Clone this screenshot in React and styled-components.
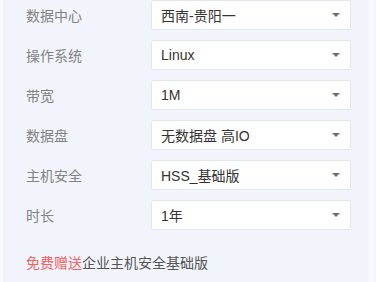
import React from "react";
import styled, { createGlobalStyle } from "styled-components";

const GlobalStyle = createGlobalStyle`
  html, body {
    margin: 0;
    padding: 0;
    background: #fafbfe;
  }
  body {
    font-family: "Liberation Sans", "Noto Sans CJK SC", sans-serif;
  }
`;

const Page = styled.div`
  display: flex;
  width: 376px;
  height: 282px;
  overflow: hidden;
`;

const EdgeStrip = styled.div`
  width: ${p => p.w}px;
  flex-shrink: 0;
  background: ${p => p.bg};
`;

const Panel = styled.section`
  flex: 1;
  background: #f1f4fb;
  padding: 0 0 0 23px;
  display: flex;
  flex-direction: column;
`;

const Form = styled.div`
  display: flex;
  flex-direction: column;
  gap: 10px;
`;

const Row = styled.div`
  display: grid;
  grid-template-columns: 125px 200px;
  align-items: center;
  height: 30px;
`;

const Label = styled.span`
  font-size: 14px;
  color: #838383;
`;

const Select = styled.div`
  box-sizing: border-box;
  height: 30px;
  background: #fff;
  border: 1px solid #e3e6ee;
  border-radius: 2px;
  display: flex;
  align-items: center;
  justify-content: space-between;
  padding: 0 10px 0 9px;
  font-size: 14px;
  color: #333;
`;

const Caret = styled.span`
  width: 0;
  height: 0;
  border-left: 4.5px solid transparent;
  border-right: 4.5px solid transparent;
  border-top: 4.5px solid #6f6f6f;
`;

const Gift = styled.p`
  margin: 23px 0 0;
  font-size: 14px;
  line-height: 20px;
  color: #555;
`;

const Highlight = styled.span`
  color: #f0625f;
`;

const fields = [
  ["数据中心", "西南-贵阳一"],
  ["操作系统", "Linux"],
  ["带宽", "1M"],
  ["数据盘", "无数据盘 高IO"],
  ["主机安全", "HSS_基础版"],
  ["时长", "1年"]
];

const App = () => (
  <Page>
    <GlobalStyle />
    <EdgeStrip w={3} bg="#fafbfe" />
    <Panel>
      <Form>
        {fields.map(([label, value]) => (
          <Row key={label}>
            <Label>{label}</Label>
            <Select>
              <span>{value}</span>
              <Caret />
            </Select>
          </Row>
        ))}
      </Form>
      <Gift>
        <Highlight>免费赠送</Highlight>企业主机安全基础版
      </Gift>
    </Panel>
    <EdgeStrip w={4} bg="#f7f9fd" />
    <EdgeStrip w={3} bg="#f2f5fb" />
  </Page>
);

export default App;
